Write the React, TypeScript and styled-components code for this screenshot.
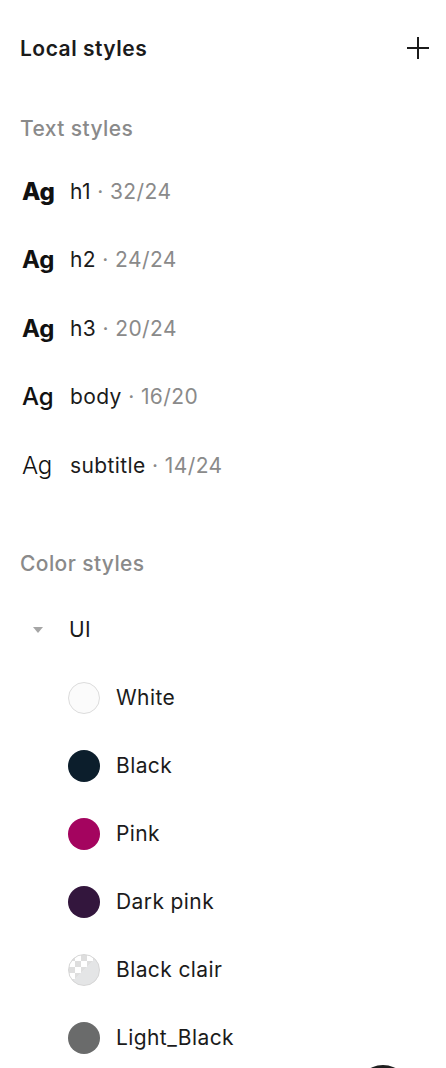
import React from 'react'
import styled, { createGlobalStyle } from 'styled-components'

const GlobalStyle = createGlobalStyle`
  html, body {
    margin: 0;
    padding: 0;
    background: #ffffff;
  }
  body {
    font-family: Inter, 'Noto Sans', 'Liberation Sans', sans-serif;
    color: #1b1b1b;
    -webkit-font-smoothing: antialiased;
  }
`

const Panel = styled.div`
  position: relative;
  width: 446px;
  height: 1068px;
  overflow: hidden;
  box-sizing: border-box;
  padding: 0 16px 0 20px;
`

const Header = styled.div`
  height: 96px;
  display: flex;
  align-items: center;
  justify-content: space-between;
`

const Title = styled.div`
  font-size: 21px;
  font-weight: 600;
  letter-spacing: 0.5px;
  color: #1b1b1b;
`

const AddButton = styled.button`
  width: 24px;
  height: 24px;
  padding: 0;
  border: none;
  background: none;
  display: flex;
  align-items: center;
  justify-content: center;
  cursor: pointer;
`

const SectionTitle = styled.div<{ $top?: number }>`
  height: 64px;
  margin-top: ${(p) => p.$top || 0}px;
  display: flex;
  align-items: center;
  font-size: 21px;
  font-weight: 500;
  letter-spacing: 0.4px;
  color: #8a8a8a;
`

const TextList = styled.div`
  margin-top: -3px;
`

const TextRow = styled.div`
  height: 68.5px;
  display: flex;
  align-items: center;
  font-size: 21px;
  letter-spacing: 0.4px;
`

const Sample = styled.span<{ $weight: number }>`
  width: 48px;
  padding-left: 2px;
  font-size: 24px;
  font-weight: ${(p) => p.$weight};
  color: #111111;
  letter-spacing: -0.2px;
`

const StyleName = styled.span`
  color: #1b1b1b;
`

const StyleMeta = styled.span`
  color: #8a8a8a;
`

const GroupRow = styled.div`
  height: 68px;
  display: flex;
  align-items: center;
  font-size: 21px;
  letter-spacing: 0.4px;
  color: #1b1b1b;
`

const Caret = styled.span`
  width: 0;
  height: 0;
  margin: 0 26px 0 13px;
  border-left: 5.5px solid transparent;
  border-right: 5.5px solid transparent;
  border-top: 6px solid #a6a6a6;
`

const ColorRow = styled.div`
  height: 68px;
  display: flex;
  align-items: center;
  padding-left: 48px;
  font-size: 21px;
  letter-spacing: 0.4px;
  color: #1b1b1b;
`

const Swatch = styled.span<{ $color: string; $outlined?: boolean }>`
  width: 32px;
  height: 32px;
  flex: none;
  box-sizing: border-box;
  border-radius: 50%;
  margin-right: 16px;
  background: ${(p) => p.$color};
  border: ${(p) => (p.$outlined ? '1px solid #dcdcdc' : 'none')};
`

const CheckerSwatch = styled.span`
  width: 32px;
  height: 32px;
  flex: none;
  box-sizing: border-box;
  border-radius: 50%;
  margin-right: 16px;
  border: 1px solid #d6d6d6;
  overflow: hidden;
  background:
    linear-gradient(135deg, transparent 50%, #e4e5e6 50%),
    conic-gradient(#ffffff 0 25%, #dedede 0 50%, #ffffff 0 75%, #dedede 0) 0 0 / 12px 12px;
`

const FloatingButton = styled.div`
  position: absolute;
  left: 355px;
  top: 1065px;
  width: 56px;
  height: 56px;
  border-radius: 50%;
  background: #1e1e1e;
`

const textStyles = [
  { name: 'h1', meta: '32/24', weight: 800 },
  { name: 'h2', meta: '24/24', weight: 700 },
  { name: 'h3', meta: '20/24', weight: 650 },
  { name: 'body', meta: '16/20', weight: 450 },
  { name: 'subtitle', meta: '14/24', weight: 300 },
]

const colors = [
  { name: 'White', color: '#fbfbfb', outlined: true },
  { name: 'Black', color: '#0c1e2c' },
  { name: 'Pink', color: '#a4045f' },
  { name: 'Dark pink', color: '#33163d' },
  { name: 'Black clair', color: 'checker' },
  { name: 'Light_Black', color: '#6a6b6b' },
]

export default function App() {
  return (
    <>
      <GlobalStyle />
      <Panel>
        <Header>
          <Title>Local styles</Title>
          <AddButton aria-label='Add style'>
            <svg width='22' height='22' viewBox='0 0 22 22'>
              <path d='M11 0v22M0 11h22' stroke='#1b1b1b' strokeWidth='2' fill='none' />
            </svg>
          </AddButton>
        </Header>

        <SectionTitle>Text styles</SectionTitle>
        <TextList>
          {textStyles.map((s) => (
            <TextRow key={s.name}>
              <Sample $weight={s.weight}>Ag</Sample>
              <StyleName>{s.name}</StyleName>
              <StyleMeta>&nbsp;·&nbsp;{s.meta}</StyleMeta>
            </TextRow>
          ))}
        </TextList>

        <SectionTitle $top={32}>Color styles</SectionTitle>
        <GroupRow>
          <Caret />
          UI
        </GroupRow>
        {colors.map((c) => (
          <ColorRow key={c.name}>
            {c.color === 'checker' ? <CheckerSwatch /> : <Swatch $color={c.color} $outlined={c.outlined} />}
            {c.name}
          </ColorRow>
        ))}
        <FloatingButton />
      </Panel>
    </>
  )
}
